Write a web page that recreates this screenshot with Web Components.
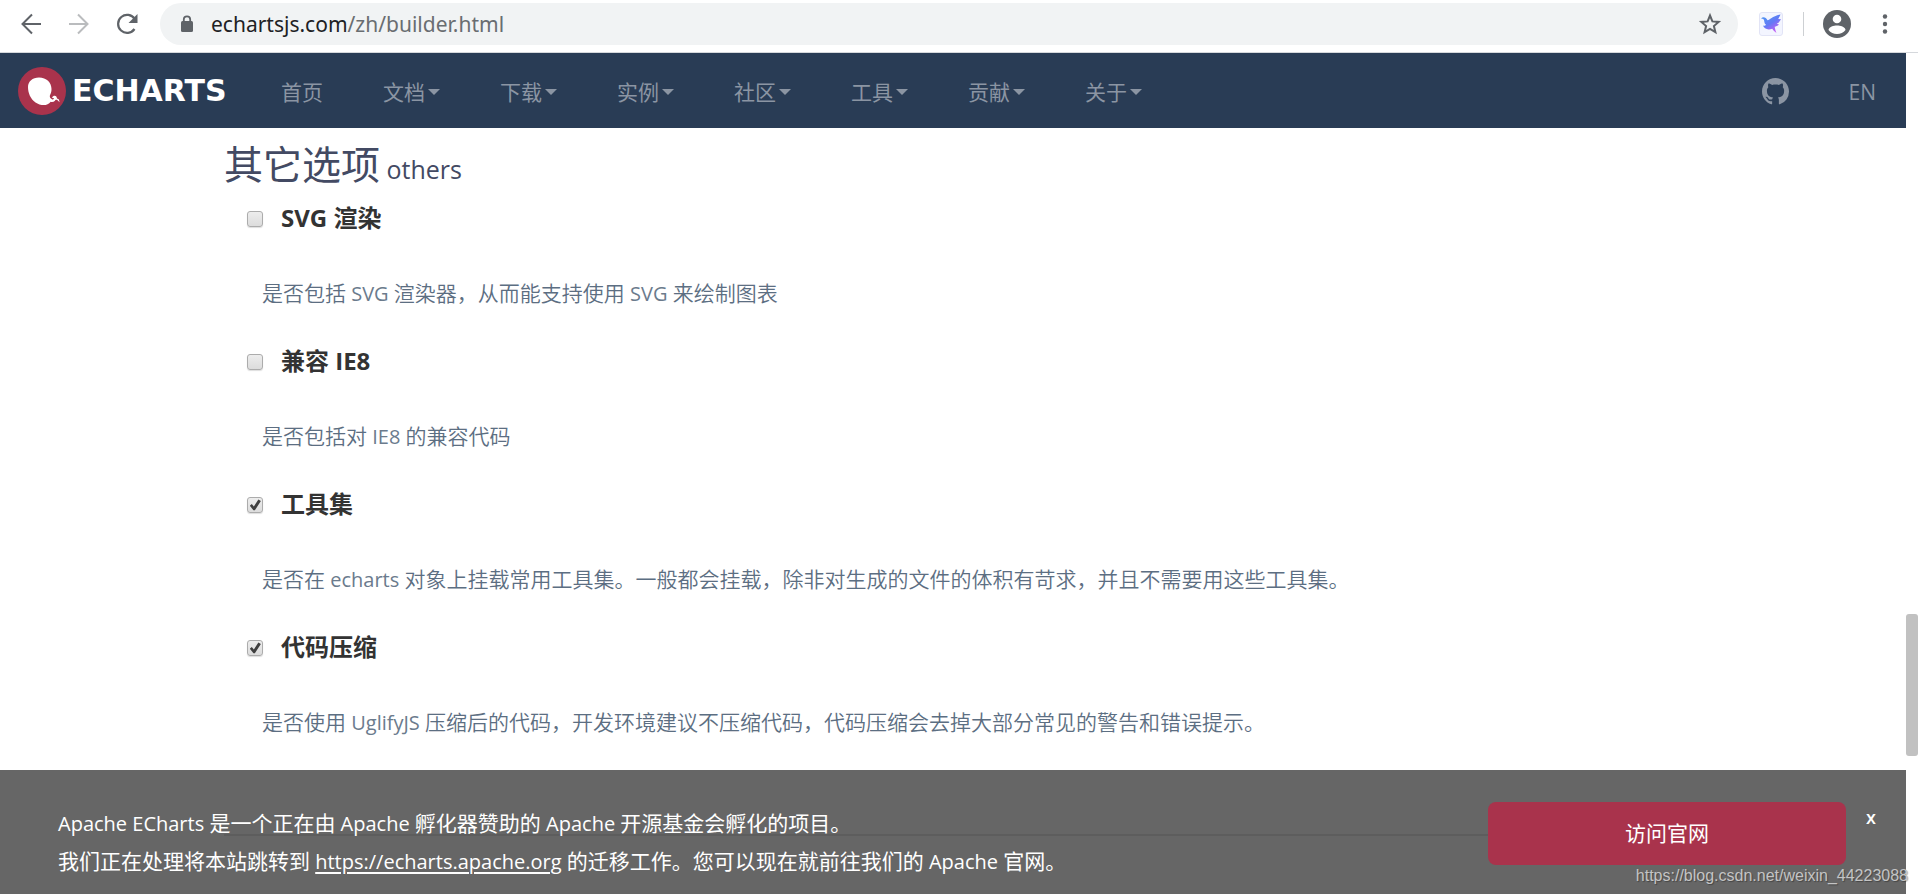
<!DOCTYPE html>
<html lang="zh">
<head>
<meta charset="utf-8">
<title>ECharts</title>
<style>
html, body { margin: 0; height: 100%; }
body { font-family: "Open Sans", "Noto Sans CJK SC", sans-serif; font-size: 21px; background: #fff; overflow: hidden; }
</style>
</head>
<body>
<app-window></app-window>

<template id="t-window">
<style>
:host { position: relative; display: flex; flex-direction: column; height: 100vh; }
.view { flex: 1; min-height: 0; display: grid; grid-template-columns: minmax(0, 1fr) 12px; }
.page { position: relative; min-height: 0; overflow: hidden; }
site-notice { position: absolute; left: 0; right: 0; bottom: 0; }
.mark { position: absolute; right: 10px; bottom: 8px; font: 16px/20px "Liberation Sans", sans-serif; color: #c4c4c4; text-shadow: 1px 1px 1px #00000055; }
</style>
<browser-bar></browser-bar>
<div class="view">
  <div class="page">
    <site-nav></site-nav>
    <builder-options>
      <span slot="title">其它选项</span>
      <span slot="sub">others</span>
      <option-item label="SVG 渲染">是否包括<span> SVG </span>渲染器，从而能支持使用<span> SVG </span>来绘制图表</option-item>
      <option-item label="兼容 IE8">是否包括对<span> IE8 </span>的兼容代码</option-item>
      <option-item label="工具集" checked>是否在<span> echarts </span>对象上挂载常用工具集。一般都会挂载，除非对生成的文件的体积有苛求，并且不需要用这些工具集。</option-item>
      <option-item label="代码压缩" checked>是否使用<span> UglifyJS </span>压缩后的代码，开发环境建议不压缩代码，代码压缩会去掉大部分常见的警告和错误提示。</option-item>
    </builder-options>
    <site-notice></site-notice>
  </div>
  <page-scrollbar></page-scrollbar>
</div>
<span class="mark">https://blog.csdn.net/weixin_44223088</span>
</template>

<template id="t-bar">
<style>
:host { display: flex; align-items: center; box-sizing: border-box; height: 53px; padding: 0 21px 4px 20px; border-bottom: 1px solid #d5d8dc; background: #fff; }
button { all: unset; display: block; flex: none; }
svg { display: block; }
.nav { display: flex; gap: 24px; }
.address { flex: 1; display: flex; align-items: center; height: 42px; margin: 0 21px 0 20px; padding: 0 16px 0 21px; border-radius: 21px; background: #f1f3f4; color: #696d71; font-family: "Noto Sans", sans-serif; line-height: 28px; }
.url { flex: 1; margin-left: 18px; }
b { font-weight: 400; color: #202124; }
.sep { width: 1px; height: 24px; margin: 0 19px 0 20px; background: #cdd0d3; }
.more { margin-left: 22px; }
</style>
<div class="nav">
  <button aria-label="Back"><svg width="24" height="24" fill="none" stroke="#5f6368" stroke-width="2"><path d="M21 12H2.5M12 2.500 2.500 12l9.500 9.500"/></svg></button>
  <button aria-label="Forward"><svg width="24" height="24" fill="none" stroke="#babcbe" stroke-width="2"><path d="M1 12h18.500M10 2.500l9.500 9.500-9.500 9.500"/></svg></button>
  <button aria-label="Reload"><svg width="24" height="24"><path d="M18.500 17a9 9 0 1 1 .2-10" fill="none" stroke="#5f6368" stroke-width="2.200"/><path d="M21.500 2v9h-9z" fill="#5f6368"/></svg></button>
</div>
<div class="address">
  <svg width="12" height="18"><rect y="6" width="12" height="11" rx="1.500" fill="#5f6368"/><path d="M2.800 7V4.500a3.200 3.200 0 0 1 6.400 0V7" fill="none" stroke="#5f6368" stroke-width="1.800"/></svg>
  <span class="url"><b>echartsjs.com</b>/zh/builder.html</span>
  <button aria-label="Bookmark"><svg width="24" height="24" fill="none" stroke="#5f6368" stroke-width="2"><path d="M12 3.500l2.400 5.900 6.300.5-4.800 4.100 1.500 6.200L12 16.900l-5.400 3.300L8.100 14 3.300 9.900l6.300-.5z"/></svg></button>
</div>
<button aria-label="Extension"><svg width="24" height="24"><defs><linearGradient id="g" x2=".7" y2="1"><stop stop-color="#4b9df2"/><stop offset=".55" stop-color="#6479f5"/><stop offset="1" stop-color="#cf5cf5"/></linearGradient></defs><rect x=".5" y=".5" width="23" height="23" rx="2.500" fill="#f3f5ff" stroke="#e2e4f6"/><path d="M2 6.500C4 4.500 7 5.200 8.500 8.300 11 8 13 4.500 21.500 2.500c-1 2-1.500 3.300-2.300 4.500l2.800.3c-1 2-2.500 3.600-4.300 4.400l2.300.8c-1.500 1.500-3 2-4.300 2.200.3 2 .8 4 1.800 6.300-1.800-1.300-3.200-2.500-4.200-4.300C8.500 18.500 5 16.500 4 13.500c2 .5 3 0 3-.7C5 11.500 5.500 9 4.800 7.500 4 6.800 3 6.600 2 6.500z" fill="url(#g)"/></svg></button>
<div class="sep"></div>
<button aria-label="Profile"><svg width="28" height="28"><circle cx="14" cy="14" r="14" fill="#5f6368"/><circle cx="14" cy="9" r="4.300" fill="#fff"/><path d="M5.500 20c0-3.300 5.500-4.600 8.500-4.600s8.500 1.300 8.500 4.600c-2 2.500-5 4-8.500 4s-6.500-1.500-8.500-4z" fill="#fff"/></svg></button>
<button class="more" aria-label="Menu"><svg width="24" height="24" fill="#5f6368"><circle cx="12" cy="4.500" r="2.200"/><circle cx="12" cy="12" r="2.200"/><circle cx="12" cy="19.500" r="2.200"/></svg></button>
</template>

<template id="t-nav">
<style>
:host { display: flex; align-items: center; height: 75px; padding: 0 30px 0 18px; background: #293c55; color: #8b95a3; line-height: 32px; }
a { color: inherit; text-decoration: none; }
.brand { display: flex; align-items: center; gap: 6px; width: 233px; font: bold 30px/32px "DejaVu Sans", sans-serif; color: #fff; }
svg { display: block; }
nav { display: flex; gap: 60px; margin: 0 auto 0 30px; padding-top: 2px; }
nav a { display: flex; align-items: center; gap: 3px; }
.drop::after { content: ""; border: 6px solid transparent; border-top-color: currentColor; border-bottom: 0; }
.end { display: flex; align-items: center; gap: 60px; padding-top: 2px; }
</style>
<a class="brand" href="#"><svg width="48" height="48"><circle cx="24" cy="24" r="24" fill="#a9334c"/><path d="M10 20c0-5.500 4.500-9.500 11-9.500 7.500 0 12.500 5 12.500 11.500 0 2-.3 3.500-1.100 5.200-.8 1.400-.7 2.500-.1 3.800l2 1.500c1.200.2 1.700-.3 1.700-1.400-.8.200-1.500-.1-2-.6 1.200-2.300 3.500-2.200 4.500-.8.300 1.600.8 2.300 2.300 2.600l.8 3-2.600-2.600c-1.200-.1-1.800 0-2 1-1.200 1.100-2.800 1.500-4.300 1-3.600 5-10.700 3.600-15.200.7C12.500 32 10 26 10 20z" fill="#fff"/></svg><span>ECHARTS</span></a>
<nav>
<a href="#">首页</a><a class="drop" href="#">文档</a><a class="drop" href="#">下载</a><a class="drop" href="#">实例</a><a class="drop" href="#">社区</a><a class="drop" href="#">工具</a><a class="drop" href="#">贡献</a><a class="drop" href="#">关于</a>
</nav>
<div class="end">
<a href="#" aria-label="GitHub"><svg width="27" height="27" viewBox="0 0 16 16" fill="currentColor"><path d="M8 0C3.580 0 0 3.580 0 8c0 3.540 2.290 6.530 5.470 7.590.4.070.55-.17.55-.38 0-.19-.01-.82-.01-1.490-2.010.37-2.530-.49-2.690-.94-.09-.23-.48-.94-.82-1.130-.28-.15-.68-.52-.01-.53.63-.01 1.080.58 1.230.82.72 1.210 1.870.87 2.330.66.070-.52.28-.87.51-1.070-1.780-.2-3.640-.89-3.640-3.950 0-.87.31-1.590.82-2.150-.08-.2-.36-1.020.08-2.120 0 0 .67-.21 2.200.82.64-.18 1.320-.27 2-.27s1.360.09 2 .27c1.530-1.040 2.200-.82 2.200-.82.44 1.100.16 1.920.08 2.120.51.56.82 1.270.82 2.150 0 3.070-1.870 3.750-3.650 3.950.29.25.54.73.54 1.480 0 1.070-.01 1.930-.01 2.200 0 .21.15.46.55.38A8.010 8.010 0 0 0 16 8c0-4.420-3.580-8-8-8z"/></svg></a>
<a href="#">EN</a>
</div>
</template>

<template id="t-options">
<style>
:host { display: block; max-width: 1458px; margin: 0 auto; padding: 9px 24px 0; }
h2 { margin: 0; font-weight: 400; font-size: 39px; line-height: 54px; color: #434a63; }
small { font-size: 25px; white-space: pre; }
hr { margin: 66px 0 0; border: 0; border-top: 2px solid #e9e9e9; }
</style>
<h2><slot name="title"></slot><small> <slot name="sub"></slot></small></h2>
<slot></slot>
<hr>
</template>

<template id="t-item">
<style>
:host { display: block; height: 143px; padding-left: 23px; }
label { display: flex; align-items: center; gap: 18px; padding-top: 6px; font-weight: 700; font-size: 24px; line-height: 32px; color: #333; }
input { appearance: none; flex: none; display: grid; place-items: center; box-sizing: border-box; width: 16px; height: 16px; margin: 2px 0 0; border: 1px solid #acacac; border-radius: 3px; background: linear-gradient(#ededed, #dcdcdc); box-shadow: 0 1px 1px #00000022; }
input:checked::before { content: ""; width: 14px; height: 14px; background: #404040; clip-path: polygon(13% 56%, 27% 43%, 42% 60%, 74% 10%, 92% 22%, 49% 88%, 39% 88%); }
p { margin: 44px 0 0 15px; font-weight: 350; line-height: 30px; color: #5c6e82; }
::slotted(span) { font-size: 20px; font-weight: 400; color: #6b7b8d; }
</style>
<label><input type="checkbox"><span></span></label>
<p><slot></slot></p>
</template>

<template id="t-notice">
<style>
:host { display: flex; align-items: flex-start; box-sizing: border-box; height: 124px; padding: 32px 30px 0 58px; background: rgba(0, 0, 0, .6); color: #fff; }
p { flex: 1; margin: 2px 0 0; line-height: 38px; }
p a { color: inherit; text-underline-offset: 3px; }
.en { font-size: 20px; line-height: 30px; }
.visit { flex: none; width: 358px; border-radius: 8px; background: #a9334c; color: #fff; line-height: 63px; text-align: center; text-decoration: none; }
button { all: unset; margin-left: 20px; font-weight: 600; font-size: 18px; line-height: 30px; }
</style>
<p><span class="en">Apache ECharts </span>是一个正在由<span class="en"> Apache </span>孵化器赞助的<span class="en"> Apache </span>开源基金会孵化的项目。<br>我们正在处理将本站跳转到<span class="en"> <a href="#">https://echarts.apache.org</a> </span>的迁移工作。您可以现在就前往我们的<span class="en"> Apache </span>官网。</p>
<a class="visit" href="#">访问官网</a>
<button aria-label="Close">x</button>
</template>

<template id="t-scroll">
<style>
:host { display: grid; grid-template-rows: 561fr 142fr 138fr; }
.thumb { grid-row: 2; border-radius: 3px; background: #c1c1c1; }
</style>
<div class="thumb"></div>
</template>

<script>
class TemplateElement extends HTMLElement {
  constructor() {
    super();
    this.attachShadow({ mode: 'open' })
      .append(document.getElementById(this.constructor.template).content.cloneNode(true));
  }
}
class OptionItem extends TemplateElement {
  static template = 't-item';
  connectedCallback() {
    this.shadowRoot.querySelector('label span').textContent = this.getAttribute('label');
    this.shadowRoot.querySelector('input').checked = this.hasAttribute('checked');
  }
}
customElements.define('browser-bar', class extends TemplateElement { static template = 't-bar'; });
customElements.define('site-nav', class extends TemplateElement { static template = 't-nav'; });
customElements.define('option-item', OptionItem);
customElements.define('builder-options', class extends TemplateElement { static template = 't-options'; });
customElements.define('site-notice', class extends TemplateElement { static template = 't-notice'; });
customElements.define('page-scrollbar', class extends TemplateElement { static template = 't-scroll'; });
customElements.define('app-window', class extends TemplateElement { static template = 't-window'; });
</script>
</body>
</html>
